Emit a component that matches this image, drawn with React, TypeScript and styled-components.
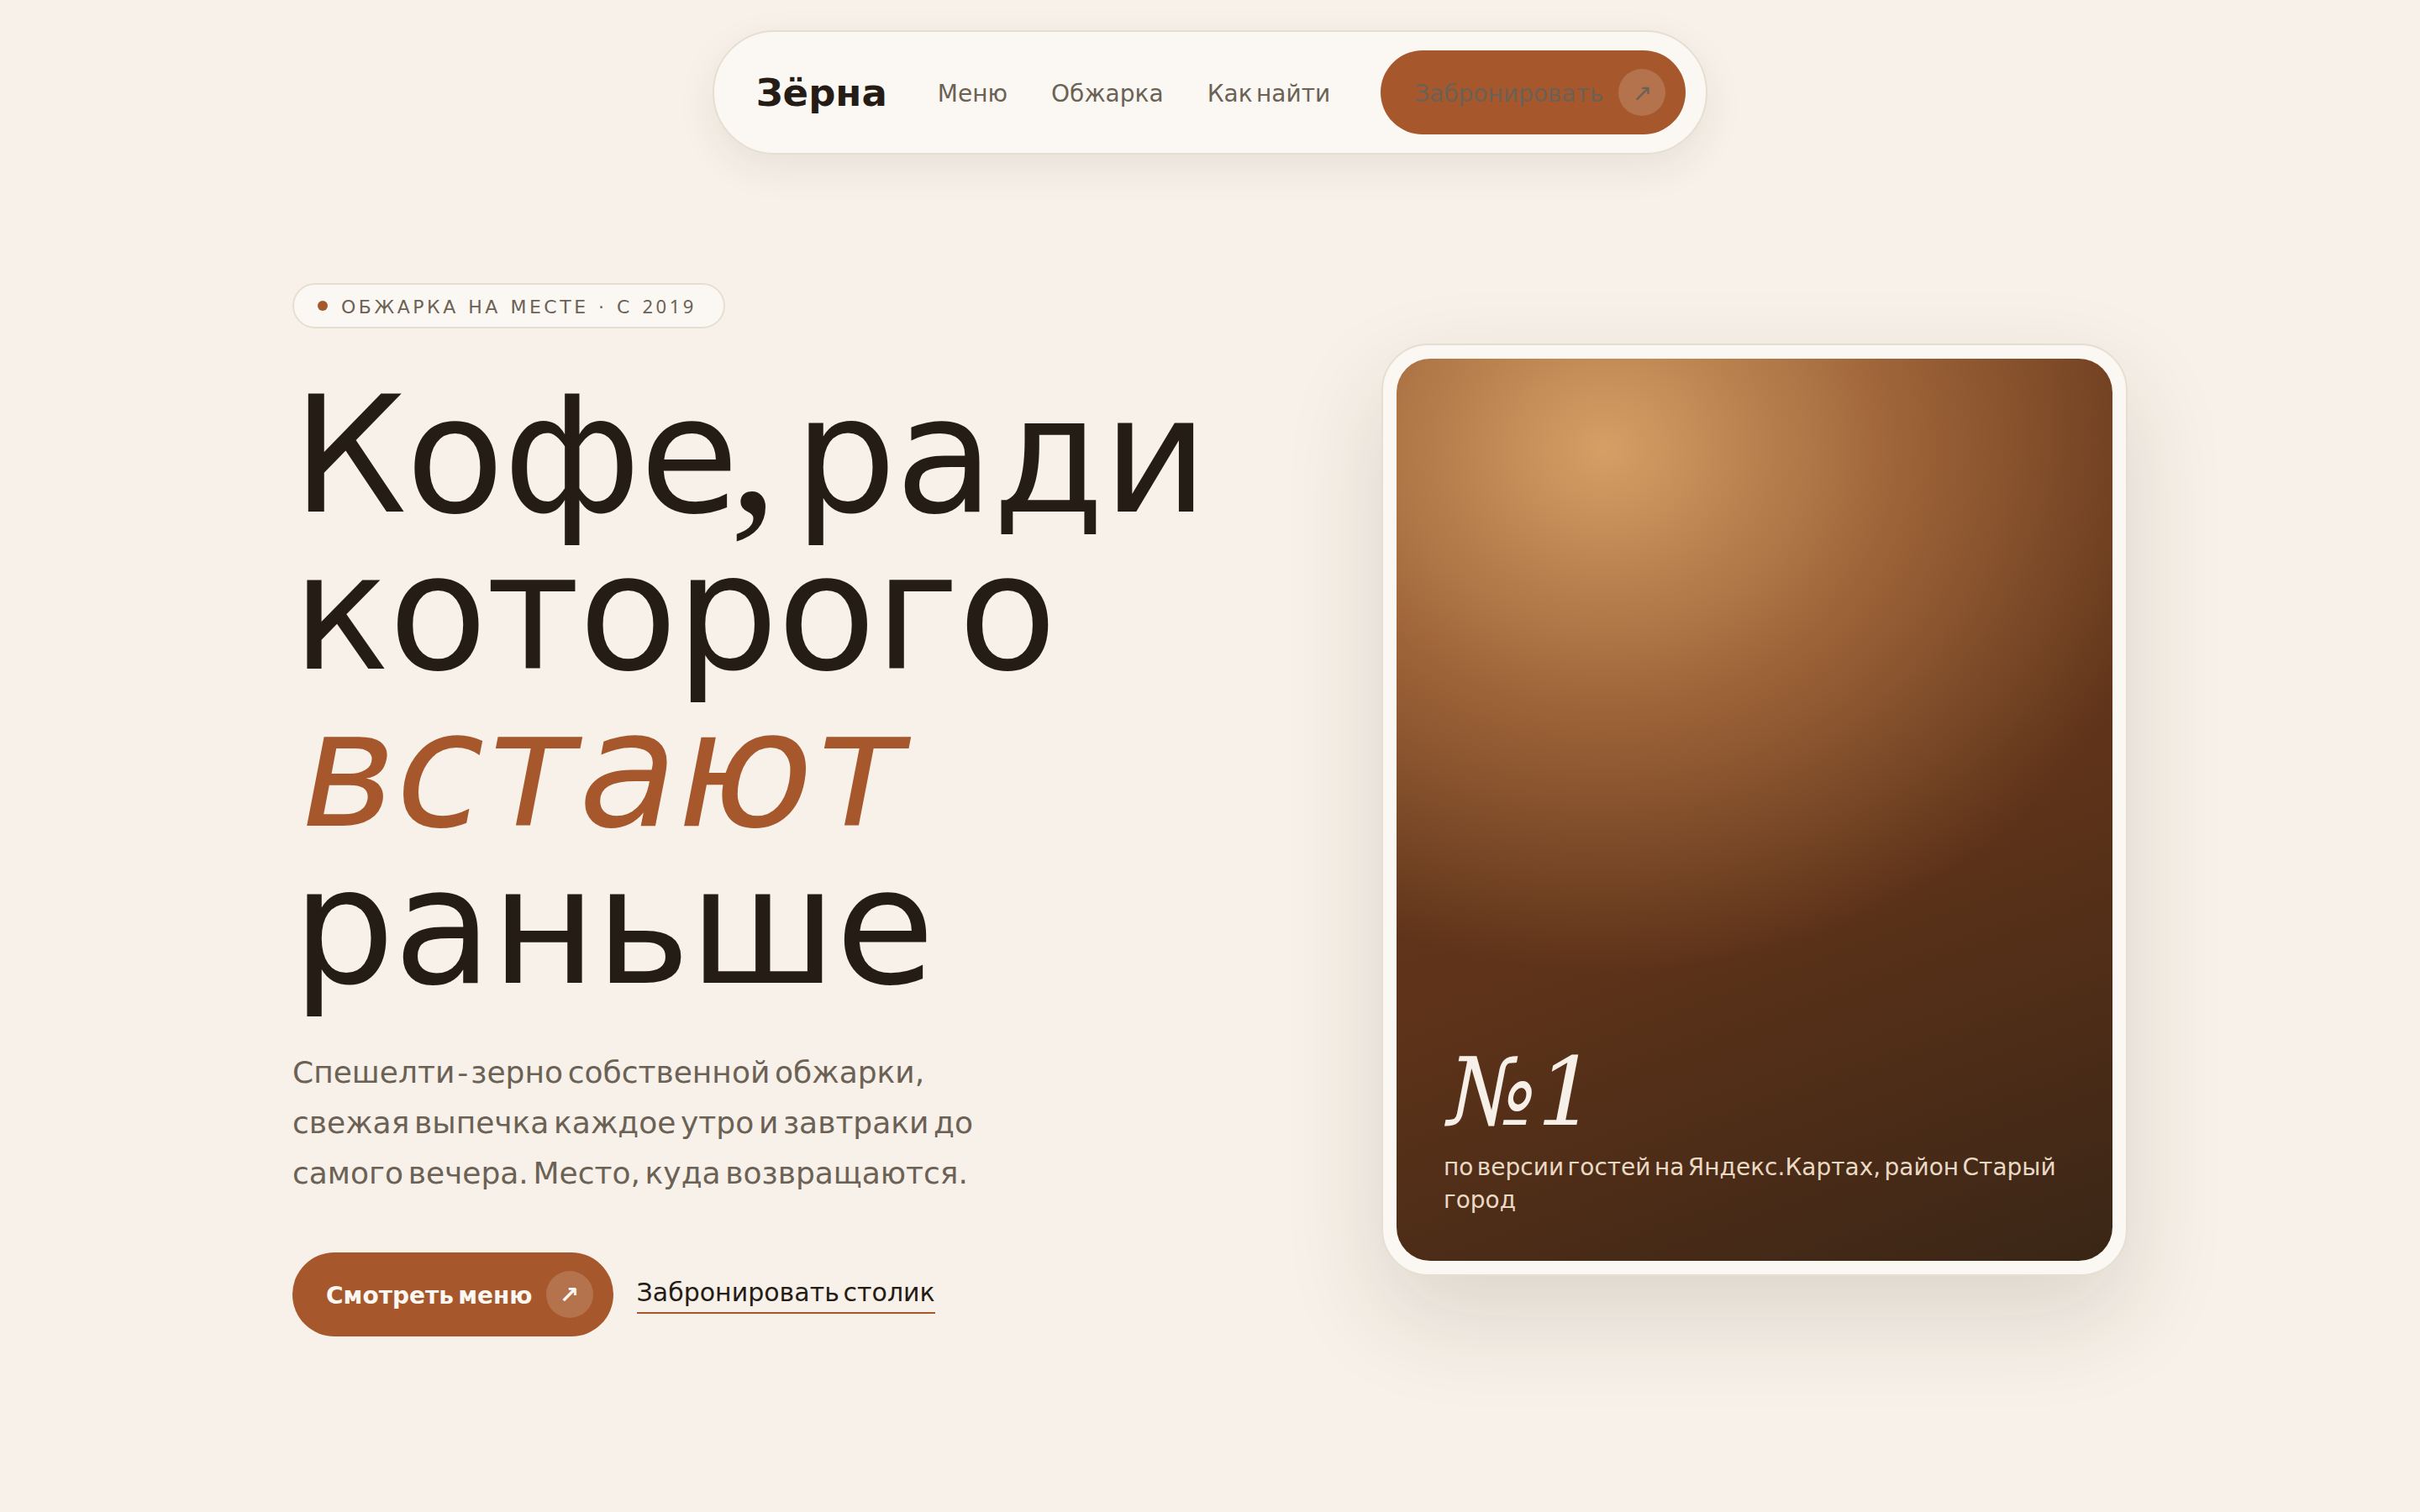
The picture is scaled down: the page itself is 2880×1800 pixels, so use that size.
import React from 'react';
import styled, { createGlobalStyle } from 'styled-components';

const GlobalStyle = createGlobalStyle`
  * { box-sizing: border-box; word-spacing: -0.16em; }
  html, body { margin: 0; padding: 0; }
  body {
    background: #f7f1e9;
    color: #261c16;
    font-family: "DejaVu Sans", sans-serif;
    font-size: 28px;
  }
`;

const Page = styled.div`
  min-height: 1800px;
  padding-top: 36px;
  display: flex;
  flex-direction: column;
  align-items: center;
`;

const Nav = styled.nav`
  display: flex;
  align-items: center;
  gap: 60px;
  height: 148px;
  padding: 0 24px 0 50px;
  background: #fbf8f3;
  border: 2px solid #e6dfd1;
  border-radius: 74px;
  box-shadow: 0 16px 48px rgba(60, 40, 20, 0.08);
`;

const Logo = styled.span`
  font-size: 45px;
  font-weight: 700;
`;

const NavLinks = styled.div`
  display: flex;
  gap: 52px;
`;

const NavLink = styled.a`
  padding-top: 2px;
  color: #6b6155;
  font-size: 28px;
`;

const Pill = styled.a<{ $muted?: boolean }>`
  display: inline-flex;
  align-items: center;
  gap: ${p => (p.$muted ? 18 : 16)}px;
  height: 100px;
  padding: 0 24px 0 40px;
  border-radius: 50px;
  background: #a6572c;
  font-size: 28px;
  font-weight: ${p => (p.$muted ? 400 : 700)};
  color: ${p => (p.$muted ? '#6b6155' : '#fbf8f3')};
`;

const PillLabel = styled.span`
  padding-top: 2px;
`;

const ArrowDot = styled.span`
  display: flex;
  align-items: center;
  justify-content: center;
  width: 56px;
  height: 56px;
  border-radius: 50%;
  background: rgba(255, 255, 255, 0.16);
`;

const Hero = styled.main`
  width: 2184px;
  margin-top: 153px;
  display: grid;
  grid-template-columns: 1fr 888px;
  align-items: center;
`;

const Copy = styled.div`
  display: flex;
  flex-direction: column;
  align-items: flex-start;
`;

const Badge = styled.div`
  display: inline-flex;
  align-items: center;
  gap: 16px;
  height: 54px;
  padding: 0 32px 0 28px;
  background: #fbf8f3;
  border: 2px solid #e6dfd1;
  border-radius: 27px;
  font-size: 22px;
  letter-spacing: 0.16em;
  color: #6b6155;
`;

const BadgeText = styled.span`
  word-spacing: 1px;
`;

const Year = styled.span`
  font-family: "Noto Sans", sans-serif;
`;

const Dot = styled.i`
  width: 12px;
  height: 12px;
  border-radius: 50%;
  background: #a6572c;
`;

const Title = styled.h1`
  margin: 58px 0 0;
  font-size: 192px;
  font-weight: 400;
  line-height: 187px;
  letter-spacing: -0.008em;
  word-spacing: -0.2em;
`;

const SerifComma = styled.span`
  margin-left: -10px;
  font-family: "Liberation Serif", serif;
  font-size: 230px;
  line-height: 0;
`;

const Accent = styled.em`
  padding-left: 10px;
  color: #a6572c;
  font-style: italic;
  letter-spacing: 0;
`;

const Lead = styled.p`
  margin: 50px 0 0;
  width: 840px;
  font-size: 36px;
  line-height: 60px;
  color: #6b6155;
`;

const Hyphen = styled.span`
  margin: 0 3px;
`;

const Actions = styled.div`
  margin-top: 64px;
  display: flex;
  align-items: center;
  gap: 28px;
`;

const TextLink = styled.a`
  padding: 2px 0 6px;
  border-bottom: 2px solid #a6572c;
  font-size: 30px;
`;

const Card = styled.figure`
  margin: 0;
  height: 1110px;
  padding: 16px;
  display: flex;
  background: #fbf8f3;
  border: 2px solid #e6dfd1;
  border-radius: 56px;
  box-shadow: 0 48px 120px rgba(60, 40, 20, 0.14);
`;

const Photo = styled.div`
  flex: 1;
  display: flex;
  flex-direction: column;
  justify-content: flex-end;
  padding: 56px 56px 53px;
  border-radius: 40px;
  color: #f6f0e8;
  background:
    radial-gradient(ellipse 82% 58% at 29% 10%, #d69f66 0%, rgba(168, 108, 62, 0.85) 50%, rgba(92, 50, 25, 0) 100%),
    linear-gradient(160deg, #6b3a1c 0%, #5c3219 60%, #3a2616 100%);
`;

const Rank = styled.div`
  padding-left: 5px;
  font-family: "DejaVu Serif", serif;
  font-style: italic;
  font-size: 112px;
  line-height: 1;
`;

const Caption = styled.figcaption`
  margin-top: 14px;
  font-size: 28px;
  line-height: 39px;
  color: #ead9c4;
`;

export default function App() {
  return (
    <Page>
      <GlobalStyle />
      <Nav>
        <Logo>Зёрна</Logo>
        <NavLinks>
          <NavLink>Меню</NavLink>
          <NavLink>Обжарка</NavLink>
          <NavLink>Как найти</NavLink>
        </NavLinks>
        <Pill $muted>
          <PillLabel>Забронировать</PillLabel>
          <ArrowDot>↗</ArrowDot>
        </Pill>
      </Nav>
      <Hero>
        <Copy>
          <Badge>
            <Dot />
            <BadgeText>
              ОБЖАРКА НА МЕСТЕ · С <Year>2019</Year>
            </BadgeText>
          </Badge>
          <Title>
            Кофе<SerifComma>,</SerifComma> ради
            <br />
            которого
            <br />
            <Accent>встают</Accent>
            <br />
            раньше
          </Title>
          <Lead>
            Спешелти<Hyphen>-</Hyphen>зерно собственной обжарки, свежая выпечка каждое утро и завтраки до самого вечера.
            Место, куда возвращаются.
          </Lead>
          <Actions>
            <Pill>
              <PillLabel>Смотреть меню</PillLabel>
              <ArrowDot>↗</ArrowDot>
            </Pill>
            <TextLink>Забронировать столик</TextLink>
          </Actions>
        </Copy>
        <Card>
          <Photo>
            <Rank>№1</Rank>
            <Caption>по версии гостей на Яндекс.Картах, район Старый город</Caption>
          </Photo>
        </Card>
      </Hero>
    </Page>
  );
}
